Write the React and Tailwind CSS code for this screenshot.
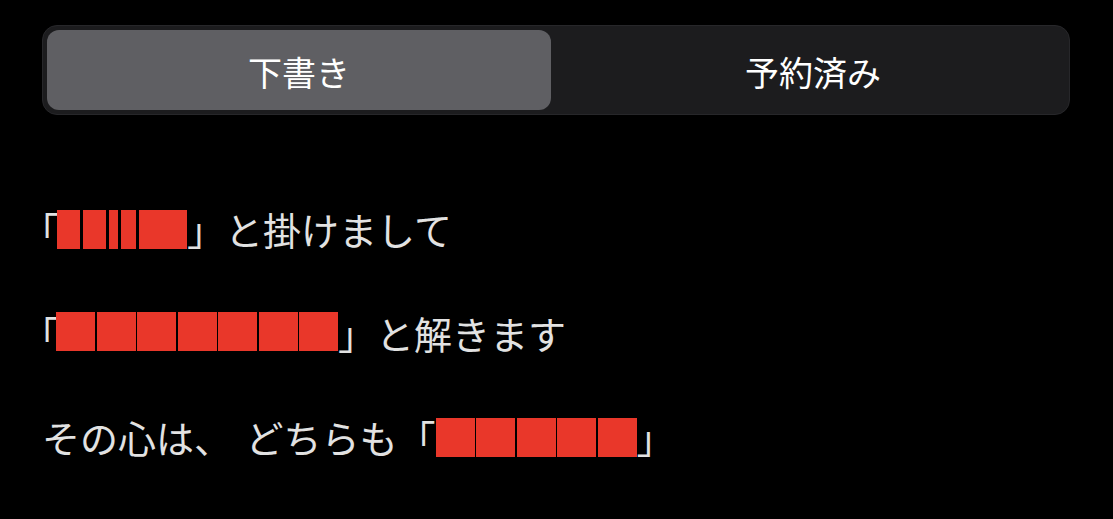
import React from "react";

const font = { fontFamily: '"Noto Sans CJK JP", "Noto Sans", sans-serif' };

const Boxes = ({ widths, gap }) => (
  <span className={`inline-flex ${gap}`}>
    {widths.map((w, i) => (
      <span key={i} className="block h-[39px] bg-[#e9372a]" style={{ width: w }} />
    ))}
  </span>
);

const Line = ({ children }) => (
  <div className="flex items-center h-[40px] text-[38px] leading-none text-[#e2e2e2] whitespace-pre">
    {children}
  </div>
);

export default function App() {
  return (
    <div className="w-[1113px] h-[519px] bg-black overflow-hidden" style={font}>
      <div className="pt-[25px] pl-[42px] pr-[43px]">
        <div className="grid grid-cols-2 gap-[10px] p-[4px] h-[90px] rounded-[15px] bg-[#1c1c1e] border border-[#27272a]">
          <div className="flex items-center justify-center rounded-[12px] bg-[#5f5f63] text-[34px] text-white pt-[3px]">
            下書き
          </div>
          <div className="flex items-center justify-center text-[34px] text-white pt-[3px]">
            予約済み
          </div>
        </div>
      </div>

      <div className="pl-[40px] pt-[94px] flex flex-col gap-[64px]">
        <Line>
          <span className="-ml-[19px] -mr-[2px]">「</span>
          <Boxes widths={[23, 23, 9, 15, 48]} gap="gap-[3px]" />
          <span>」と掛けまして</span>
        </Line>
        <Line>
          <span className="-ml-[19px]">「</span>
          <span className="-ml-[3px]">
            <Boxes widths={[39, 39, 39, 39, 39, 39, 39]} gap="gap-[1.5px]" />
          </span>
          <span>」と解きます</span>
        </Line>
        <Line>
          <span className="ml-[2px]">その心は、 </span>
          <span className="ml-[5px]">どちらも「</span>
          <Boxes widths={[39, 39, 39, 39, 39]} gap="gap-[1.5px]" />
          <span>」</span>
        </Line>
      </div>
    </div>
  );
}
